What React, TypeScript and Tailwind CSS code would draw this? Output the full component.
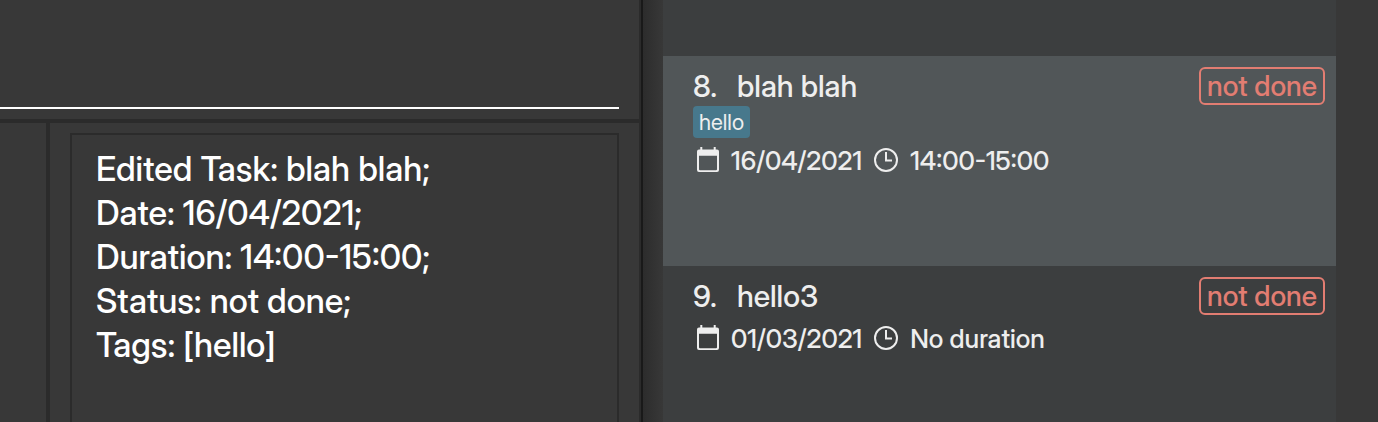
import React from "react";

type Task = {
  id: number;
  name: string;
  tags: string[];
  date: string;
  duration: string;
  status: string;
  selected?: boolean;
};

const tasks: Task[] = [
  { id: 8, name: "blah blah", tags: ["hello"], date: "16/04/2021", duration: "14:00-15:00", status: "not done", selected: true },
  { id: 9, name: "hello3", tags: [], date: "01/03/2021", duration: "No duration", status: "not done" },
];

const resultLines = [
  "Edited Task: blah blah;",
  "Date: 16/04/2021;",
  "Duration: 14:00-15:00;",
  "Status: not done;",
  "Tags: [hello]",
];

function CalendarIcon() {
  return (
    <svg aria-hidden="true" width="22" height="26" viewBox="0 0 22 26" className="shrink-0" fill="#eeeeee">
      <path fillRule="evenodd" d="M3.3 0h2v2.6h11.4V0h2v2.6H20a2 2 0 0 1 2 2V23a2 2 0 0 1-2 2H2a2 2 0 0 1-2-2V4.6a2 2 0 0 1 2-2h1.3ZM2 8.7v13.5a1 1 0 0 0 1 1h16a1 1 0 0 0 1-1V8.7Z" />
    </svg>
  );
}

function ClockIcon() {
  return (
    <svg aria-hidden="true" width="24" height="24" viewBox="0 0 24 24" className="shrink-0" fill="none" stroke="#eeeeee" strokeWidth="2">
      <circle cx="12" cy="12" r="11" />
      <path d="M12 4v8.5h6" />
    </svg>
  );
}

function TaskCard({ task }: { task: Task }) {
  return (
    <li className={`h-[210px] shrink-0 pt-[11px] pr-[11px] pl-[30px] text-[#eeeeee] ${task.selected ? "bg-[#515658]" : "bg-[#3c3e3f]"}`}>
      <div className="flex h-[39px] items-start justify-between">
        <h2 className="flex gap-5 text-[30px] leading-[38px] font-medium">
          <span>{task.id}.</span>
          <span>{task.name}</span>
        </h2>
        <span className="flex h-[38px] items-center rounded-md border-2 border-[#e27d72] px-1.5 text-[28px] leading-8 font-medium whitespace-nowrap text-[#e27d72]">
          {task.status}
        </span>
      </div>
      {task.tags.length > 0 && (
        <div className="flex gap-1">
          {task.tags.map((tag) => (
            <span key={tag} className="flex h-8 items-center rounded-sm bg-[#47788c] px-1.5 text-[22px]">
              {tag}
            </span>
          ))}
        </div>
      )}
      <div className="flex h-11 items-center pl-1 text-[26px] font-medium whitespace-nowrap">
        <CalendarIcon />
        <span className="ml-3">{task.date}</span>
        <span className="ml-3 flex"><ClockIcon /></span>
        <span className="ml-3">{task.duration}</span>
      </div>
    </li>
  );
}

export default function App() {
  return (
    <main className="grid h-screen grid-cols-[643fr_735fr] overflow-hidden bg-[#383838] font-['Inter_Display','Inter',sans-serif]">
      <section className="flex min-w-0 flex-col border-r-2 border-[#191919]">
        <div className="flex h-[123px] shrink-0 flex-col border-r-2 border-b-4 border-[#2b2b2b] pr-5">
          <input aria-label="Command" className="h-[109px] w-full border-b-2 border-white bg-transparent text-4xl text-white outline-none" />
        </div>
        <div className="flex min-h-0 flex-1 border-r-2 border-[#2b2b2b]">
          <div className="w-[50px] shrink-0 border-r-4 border-[#2b2b2b]" />
          <div className="flex min-w-0 flex-1 pt-2.5 pr-5 pl-5">
            <div className="flex-1 border-2 border-b-0 border-[#2b2b2b] pt-3 pl-6 text-[34px] leading-[44px] font-medium whitespace-nowrap text-white">
              {resultLines.map((line) => (
                <p key={line}>{line}</p>
              ))}
            </div>
          </div>
        </div>
      </section>
      <section className="flex min-w-0 bg-linear-to-r from-[#2c2c2c] to-[#383838] to-[20px] pr-[42px] pl-5">
        <ul className="flex min-w-0 flex-1 flex-col">
          <li className="h-14 shrink-0 bg-[#3c3e3f]" />
          {tasks.map((task) => (
            <TaskCard key={task.id} task={task} />
          ))}
        </ul>
      </section>
    </main>
  );
}
